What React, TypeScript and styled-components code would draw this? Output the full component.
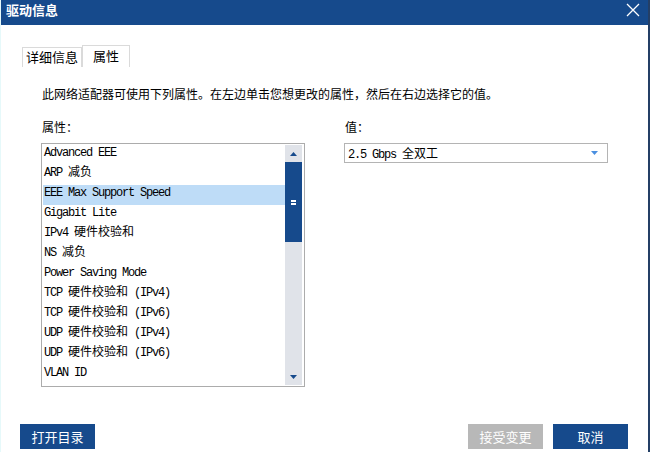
import { FC } from "react";
import styled, { createGlobalStyle } from "styled-components";

const GlobalStyle = createGlobalStyle`
  html, body {
    margin: 0;
    padding: 0;
    background: #ffffff;
    overflow: hidden;
  }
  body {
    font-family: "Noto Sans CJK SC", "Noto Sans", sans-serif;
    color: #000;
  }
`;

const Window = styled.div`
  width: 650px;
  height: 452px;
  box-sizing: border-box;
  display: flex;
  flex-direction: column;
  background: #ffffff;
  border-left: 1px solid #e6f9fa;
  border-right: 2px solid #243f66;
`;

const TitleBar = styled.div`
  height: 25px;
  flex: none;
  display: flex;
  align-items: center;
  justify-content: space-between;
  padding: 0 8px 0 5px;
  background: #164a8c;
`;

const Title = styled.div`
  color: #ffffff;
  font-size: 13px;
  font-weight: 700;
  line-height: 16px;
  margin-top: -5px;
`;

const CloseIcon = styled.svg`
  width: 14px;
  height: 14px;
  margin-top: -6px;
`;

const Body = styled.div`
  flex: 1;
  display: flex;
  flex-direction: column;
  padding: 20px 20px 3px 21px;
`;

const TabStrip = styled.div`
  display: flex;
  align-items: flex-end;
  height: 22px;
`;

const Tab = styled.div<{ $active?: boolean }>`
  box-sizing: border-box;
  height: ${(p) => (p.$active ? 22 : 20)}px;
  width: ${(p) => (p.$active ? 48 : 60)}px;
  border: 1px solid #dadada;
  border-bottom: none;
  display: flex;
  align-items: center;
  justify-content: center;
  padding-bottom: ${(p) => (p.$active ? 1 : 2)}px;
  font-size: 13px;
  line-height: 16px;
  background: #ffffff;
`;

const Description = styled.div`
  margin: 19px 0 0 20px;
  font-size: 12px;
  line-height: 16px;
`;

const Columns = styled.div`
  display: grid;
  grid-template-columns: 264px 264px;
  column-gap: 39px;
  margin: 17px 0 0 19px;
`;

const Column = styled.div`
  display: flex;
  flex-direction: column;
`;

const FieldLabel = styled.div`
  font-size: 12px;
  line-height: 16px;
  height: 16px;
  margin: 0 0 8px 1px;
`;

const ListBox = styled.div`
  box-sizing: border-box;
  height: 244px;
  border: 1px solid #acacac;
  padding: 1px;
  display: flex;
`;

const Rows = styled.div`
  flex: 1;
  overflow: hidden;
`;

const Row = styled.div<{ $selected?: boolean }>`
  box-sizing: border-box;
  height: 20px;
  padding: 0 0 0 1px;
  line-height: 9px;
  white-space: nowrap;
  background: ${(p) => (p.$selected ? "#bedcf7" : "transparent")};
`;

const Latin = styled.span`
  font-family: "Liberation Mono", "DejaVu Sans Mono", monospace;
  font-size: 12px;
  letter-spacing: -1.2px;
`;

const Cjk = styled.span`
  font-family: "Noto Sans CJK SC", sans-serif;
  font-size: 12px;
`;

const ScrollBar = styled.div`
  width: 17px;
  margin-right: 1px;
  display: flex;
  flex-direction: column;
  background: #e0e3e9;
`;

const ArrowCell = styled.div`
  height: 17px;
  display: flex;
  align-items: center;
  justify-content: center;
`;

const Thumb = styled.div`
  height: 80px;
  background: #164a8c;
  display: flex;
  flex-direction: column;
  align-items: center;
  justify-content: center;
  gap: 1px;
`;

const Grip = styled.div`
  width: 5px;
  height: 2px;
  background: #ffffff;
`;

const Track = styled.div`
  flex: 1;
  display: flex;
  flex-direction: column;
  justify-content: flex-end;
`;

const Select = styled.div`
  box-sizing: border-box;
  height: 20px;
  border: 1px solid #b4b4b4;
  display: flex;
  align-items: center;
  justify-content: space-between;
  padding: 0 9px 1px 3px;
  line-height: 14px;
`;

const Footer = styled.div`
  margin-top: auto;
  margin-left: -2px;
  display: flex;
  align-items: center;
  justify-content: space-between;
`;

const ButtonGroup = styled.div`
  display: flex;
  gap: 10px;
`;

const Button = styled.div<{ $disabled?: boolean }>`
  width: 75px;
  height: 25px;
  display: flex;
  align-items: center;
  justify-content: center;
  color: #ffffff;
  font-size: 13px;
  background: ${(p) => (p.$disabled ? "#b8b8b8" : "#164a8c")};
`;

const Triangle: FC<{ down?: boolean; color: string }> = ({ down, color }) => (
  <svg width="7" height="4" viewBox="0 0 7 4">
    <polygon points={down ? "0,0 7,0 3.5,4" : "0,4 7,4 3.5,0"} fill={color} />
  </svg>
);

const MixedText: FC<{ text: string }> = ({ text }) => {
  const parts = text.match(/[\u3000-\u9fff\uff00-\uffef]+|[^\u3000-\u9fff\uff00-\uffef]+/g) || [];
  return (
    <>
      {parts.map((part, i) =>
        /[\u3000-\u9fff\uff00-\uffef]/.test(part) ? (
          <Cjk key={i}>{part}</Cjk>
        ) : (
          <Latin key={i}>{part}</Latin>
        )
      )}
    </>
  );
};

const properties = [
  "Advanced EEE",
  "ARP 减负",
  "EEE Max Support Speed",
  "Gigabit Lite",
  "IPv4 硬件校验和",
  "NS 减负",
  "Power Saving Mode",
  "TCP 硬件校验和 (IPv4)",
  "TCP 硬件校验和 (IPv6)",
  "UDP 硬件校验和 (IPv4)",
  "UDP 硬件校验和 (IPv6)",
  "VLAN ID",
];

const App: FC = () => {
  return (
    <>
      <GlobalStyle />
      <Window>
        <TitleBar>
          <Title>驱动信息</Title>
          <CloseIcon viewBox="0 0 14 14">
            <path d="M1 1 L13 13 M13 1 L1 13" stroke="#ffffff" strokeWidth="1.3" />
          </CloseIcon>
        </TitleBar>
        <Body>
          <TabStrip>
            <Tab>详细信息</Tab>
            <Tab $active>属性</Tab>
          </TabStrip>
          <Description>
            此网络适配器可使用下列属性。在左边单击您想更改的属性，然后在右边选择它的值。
          </Description>
          <Columns>
            <Column>
              <FieldLabel>属性：</FieldLabel>
              <ListBox>
                <Rows>
                  {properties.map((p, i) => (
                    <Row key={p} $selected={i === 2}>
                      <MixedText text={p} />
                    </Row>
                  ))}
                </Rows>
                <ScrollBar>
                  <ArrowCell>
                    <Triangle color="#164a8c" />
                  </ArrowCell>
                  <Thumb>
                    <Grip />
                    <Grip />
                  </Thumb>
                  <Track>
                    <ArrowCell>
                      <Triangle down color="#164a8c" />
                    </ArrowCell>
                  </Track>
                </ScrollBar>
              </ListBox>
            </Column>
            <Column>
              <FieldLabel>值：</FieldLabel>
              <Select>
                <span>
                  <MixedText text="2.5 Gbps 全双工" />
                </span>
                <Triangle down color="#4a8fe0" />
              </Select>
            </Column>
          </Columns>
          <Footer>
            <Button>打开目录</Button>
            <ButtonGroup>
              <Button $disabled>接受变更</Button>
              <Button>取消</Button>
            </ButtonGroup>
          </Footer>
        </Body>
      </Window>
    </>
  );
};

export default App;
